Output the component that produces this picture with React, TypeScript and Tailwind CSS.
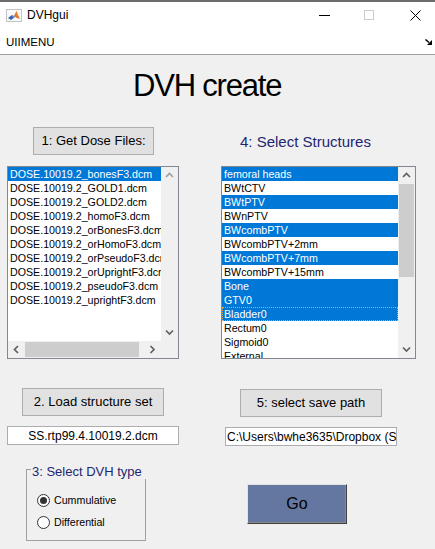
import React from "react";

type Dir = "up" | "down" | "left" | "right";

const Chevron = ({ dir, color = "#606060" }: { dir: Dir; color?: string }) => {
  const paths: Record<Dir, string> = {
    up: "M1 5 L4.5 1.5 L8 5",
    down: "M1 1.5 L4.5 5 L8 1.5",
    left: "M5 1 L1.5 4.5 L5 8",
    right: "M1.5 1 L5 4.5 L1.5 8",
  };
  const isV = dir === "up" || dir === "down";
  return (
    <svg width={isV ? 9 : 7} height={isV ? 7 : 9} viewBox={isV ? "0 0 9 7" : "0 0 7 9"}>
      <path d={paths[dir]} fill="none" stroke={color} strokeWidth="1.7" />
    </svg>
  );
};

const MatlabIcon = () => (
  <svg width="16" height="13" viewBox="0 0 16 13" className="ml-[6px]">
    <rect x="0.5" y="0.5" width="15" height="12" fill="#fafafa" stroke="#c4c4c4" />
    <polygon points="2,9 6,6 9,8 5,11" fill="#2f66b0" />
    <polygon points="6,6 9,8 7,9" fill="#6b9ad4" />
    <polygon points="8,7 10.5,2 12.5,7 14,10 10,8.5" fill="#e2711d" />
    <polygon points="10.5,2 12.5,7 11,7.5" fill="#f3a44a" />
  </svg>
);

const Btn = ({ children, className = "" }: { children: React.ReactNode; className?: string }) => (
  <div
    className={`h-[28px] bg-[#e1e1e1] border border-[#adadad] flex items-center justify-center text-[13px] text-black ${className}`}
  >
    {children}
  </div>
);

const doseFiles = [
  "DOSE.10019.2_bonesF3.dcm",
  "DOSE.10019.2_GOLD1.dcm",
  "DOSE.10019.2_GOLD2.dcm",
  "DOSE.10019.2_homoF3.dcm",
  "DOSE.10019.2_orBonesF3.dcm",
  "DOSE.10019.2_orHomoF3.dcm",
  "DOSE.10019.2_orPseudoF3.dcm",
  "DOSE.10019.2_orUprightF3.dcm",
  "DOSE.10019.2_pseudoF3.dcm",
  "DOSE.10019.2_uprightF3.dcm",
];

const structures: { name: string; sel: boolean; focus?: boolean }[] = [
  { name: "femoral heads", sel: true },
  { name: "BWtCTV", sel: false },
  { name: "BWtPTV", sel: true },
  { name: "BWnPTV", sel: false },
  { name: "BWcombPTV", sel: true },
  { name: "BWcombPTV+2mm", sel: false },
  { name: "BWcombPTV+7mm", sel: true },
  { name: "BWcombPTV+15mm", sel: false },
  { name: "Bone", sel: true },
  { name: "GTV0", sel: true },
  { name: "Bladder0", sel: true, focus: true },
  { name: "Rectum0", sel: false },
  { name: "Sigmoid0", sel: false },
  { name: "External", sel: false },
];

const Row = ({ name, sel, focus }: { name: string; sel: boolean; focus?: boolean }) => (
  <div
    className={`h-[14px] leading-[14px] text-[10.67px] pl-[2px] whitespace-nowrap ${
      sel ? "bg-[#0078d7] text-white" : "text-black"
    } ${focus ? "outline-1 outline-dotted outline-[#f0a23a] -outline-offset-1" : ""}`}
  >
    {name}
  </div>
);

const Radio = ({ checked, label }: { checked: boolean; label: string }) => (
  <div className="h-[22px] flex items-center">
    <div className="w-[13px] h-[13px] rounded-full border border-[#333333] bg-white flex items-center justify-center">
      {checked && <div className="w-[7px] h-[7px] rounded-full bg-[#333333]" />}
    </div>
    <span className="ml-[4px] text-[10.67px] text-black">{label}</span>
  </div>
);

export default function App() {
  return (
    <div className="w-[435px] h-[549px] overflow-hidden flex flex-col font-['Liberation_Sans',Arial,sans-serif] bg-[#f0f0f0]">
      {/* window frame top */}
      <div className="h-[2px] bg-[#6b6b6b]" />
      {/* title bar */}
      <div className="h-[26px] bg-white flex items-center">
        <MatlabIcon />
        <span className="ml-[5px] text-[12px] text-black">DVHgui</span>
        <div className="ml-auto mr-[14px] flex items-center">
          <div className="w-[11px] h-px bg-black" />
          <div className="ml-[34px] w-[10px] h-[10px] border border-[#cccccc]" />
          <svg className="ml-[36px]" width="11" height="11" viewBox="0 0 11 11">
            <path d="M0.5 0.5 L10.5 10.5 M10.5 0.5 L0.5 10.5" stroke="black" strokeWidth="1" />
          </svg>
        </div>
      </div>
      {/* menu bar */}
      <div className="h-[26px] bg-white flex items-center justify-between pl-[6px] pr-[3px] pt-[3px]">
        <span className="text-[11.5px] text-black">UIIMENU</span>
        <svg width="7" height="6" viewBox="0 0 7 6" className="-mt-[2px]">
          <path d="M0.5 0.5 L4 3.5" stroke="black" strokeWidth="1.5" />
          <polygon points="2,6 7,6 7,1" fill="black" />
        </svg>
      </div>
      <div className="h-px bg-[#a0a0a0]" />

      {/* body */}
      <div className="flex-1 bg-[#f0f0f0]">
        <div className="pt-[15px] pl-[133px] text-[31px] leading-[31px] tracking-[-1.2px] text-black">
          DVH create
        </div>

        <div className="mt-[26px] flex pl-[7px]">
          {/* left column */}
          <div className="w-[172px] flex flex-col">
            <Btn className="ml-[26px] w-[121px]">1: Get Dose Files:</Btn>

            <div className="mt-[11px] w-[172px] h-[193px] border border-[#828790] bg-white flex flex-col">
              <div className="flex flex-1 min-h-0">
                <div className="w-[153px] overflow-hidden bg-white">
                  {doseFiles.map((f, i) => (
                    <Row key={f} name={f} sel={i === 0} />
                  ))}
                </div>
                <div className="w-[17px] bg-[#f0f0f0] flex flex-col justify-between">
                  <div className="h-[17px] flex items-center justify-center">
                    <Chevron dir="up" color="#a0a0a0" />
                  </div>
                  <div className="h-[17px] flex items-center justify-center">
                    <Chevron dir="down" />
                  </div>
                </div>
              </div>
              <div className="h-[17px] flex">
                <div className="w-[153px] bg-[#f0f0f0] flex items-center">
                  <div className="w-[17px] h-[17px] flex items-center justify-center">
                    <Chevron dir="left" />
                  </div>
                  <div className="w-[114px] h-[15px] bg-[#cdcdcd]" />
                  <div className="w-[5px]" />
                  <div className="w-[17px] h-[17px] flex items-center justify-center">
                    <Chevron dir="right" />
                  </div>
                </div>
                <div className="w-[17px] bg-[#f0f0f0]" />
              </div>
            </div>

            <Btn className="mt-[29px] ml-[15px] w-[142px]">2. Load structure set</Btn>

            <div className="mt-[10px] w-[172px] h-[19px] bg-white border border-[#adadad] flex items-center justify-center text-[12px] text-black">
              SS.rtp99.4.10019.2.dcm
            </div>

            <div className="mt-[24px] ml-[19px] w-[120px] h-[72px] relative border border-[#a0a0a0]">
              <div className="absolute -top-[6px] left-[4px] w-[117px] h-[15px] leading-[15px] bg-[#f0f0f0] pl-[1px] text-[13px] text-[#1e2670] whitespace-nowrap">
                3: Select DVH type
              </div>
              <div className="pt-[19px] pl-[10px] flex flex-col">
                <Radio checked label="Cummulative" />
                <Radio checked={false} label="Differential" />
              </div>
            </div>
          </div>

          {/* right column */}
          <div className="ml-[42px] w-[195px] flex flex-col">
            <div className="mt-[7px] ml-[19px] text-[15px] leading-[15px] text-[#1e2670] whitespace-nowrap">
              4: Select Structures
            </div>

            <div className="mt-[17px] w-[195px] h-[193px] border border-[#828790] bg-white flex">
              <div className="w-[176px] overflow-hidden bg-white">
                {structures.map((s) => (
                  <Row key={s.name} name={s.name} sel={s.sel} focus={s.focus} />
                ))}
              </div>
              <div className="w-[17px] bg-[#f0f0f0] flex flex-col">
                <div className="h-[17px] flex items-center justify-center">
                  <Chevron dir="up" />
                </div>
                <div className="h-[93px] flex justify-center">
                  <div className="w-[15px] h-full bg-[#cdcdcd]" />
                </div>
                <div className="flex-1" />
                <div className="h-[17px] flex items-center justify-center">
                  <Chevron dir="down" />
                </div>
              </div>
            </div>

            <Btn className="mt-[30px] ml-[19px] w-[142px]">5: select save path</Btn>

            <div className="mt-[10px] ml-[4px] w-[172px] h-[19px] bg-white border border-[#adadad] flex items-center overflow-hidden pl-[1px] text-[12px] text-black whitespace-nowrap">
              {"C:\\Users\\bwhe3635\\Dropbox (Sydney Uni)\\DVH"}
            </div>

            <div className="mt-[38px] ml-[26px] w-[100px] h-[40px] bg-[#6477a0] border border-t-[#e3e3e3] border-l-[#e3e3e3] border-r-[#404040] border-b-[#404040] shadow-[inset_-1px_-1px_0_#8a8a8a] flex items-center justify-center text-[16px] text-black">
              Go
            </div>
          </div>
        </div>
      </div>
    </div>
  );
}
